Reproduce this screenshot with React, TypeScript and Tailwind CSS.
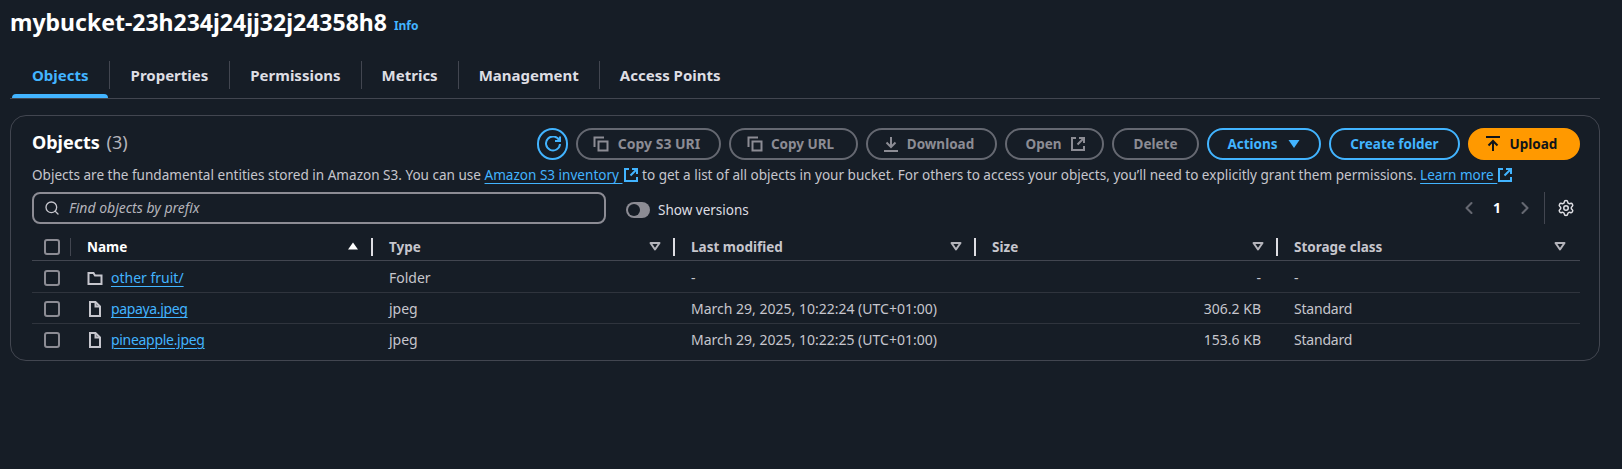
import React from "react";
import { Settings, ChevronLeft, ChevronRight, Search } from "lucide-react";

const S = { fill: "none", stroke: "currentColor", strokeWidth: 2 } as const;

const Ic = ({ children, cls = "w-4 h-4" }: { children: React.ReactNode; cls?: string }) => (
  <svg viewBox="0 0 16 16" className={`${cls} shrink-0`} {...S}>
    {children}
  </svg>
);
const CopyI = () => (
  <Ic>
    <path d="M1.5 11V1.5H11" />
    <path d="M5.5 5.5h9v9h-9z" />
  </Ic>
);
const DownloadI = () => (
  <Ic>
    <path d="M8 1v10M3.5 6.5 8 11l4.5-4.5M1 15h14" />
  </Ic>
);
const UploadI = () => (
  <Ic>
    <path d="M1 1h14M8 15V5M3.5 9.5 8 5l4.5 4.5" />
  </Ic>
);
const ExtI = ({ cls = "w-4 h-4" }: { cls?: string }) => (
  <Ic cls={cls}>
    <path d="M6 2H2v12h12v-4" />
    <path d="M9 2h5v5M14 2 7.5 8.5" />
  </Ic>
);
const RefreshI = () => (
  <Ic>
    <path d="M10 5h5V.5" />
    <path d="M14.4 4.6A7 7 0 1 0 15 8" />
  </Ic>
);
const FolderI = () => (
  <Ic>
    <path d="M1.5 3h5l1.5 2.5h6.5V14h-13z" />
  </Ic>
);
const FileI = () => (
  <Ic>
    <path d="M3 1h5.5L13 5.5V15H3z" />
    <path d="M8.5 1v4.5H13" />
  </Ic>
);
const Caret = () => (
  <svg viewBox="0 0 16 16" className="w-4 h-4 shrink-0 text-[#b4b4bb] mt-[-2px]" fill="none" stroke="currentColor" strokeWidth="2">
    <path d="M3.5 5h9L8 11.5z" strokeLinejoin="round" />
  </svg>
);
const SortUp = () => (
  <svg viewBox="0 0 16 16" className="w-4 h-4 shrink-0 text-white" fill="currentColor">
    <path d="M8 3.5 13 10.5H3z" />
  </svg>
);

const Btn = ({ children, kind = "off", cls = "" }: { children: React.ReactNode; kind?: "off" | "blue" | "main"; cls?: string }) => {
  const k =
    kind === "off"
      ? "border-[#656871] text-[#8c8c94]"
      : kind === "blue"
        ? "border-[#42b4ff] text-[#42b4ff]"
        : "border-[#ff9900] bg-[#ff9900] text-[#0f141a]";
  return (
    <div className={`h-8 rounded-full border-2 flex items-center justify-center gap-2 text-[13.5px] font-bold ${k} ${cls}`}>
      {children}
    </div>
  );
};

const tabs = ["Objects", "Properties", "Permissions", "Metrics", "Management", "Access Points"];
const cols = "grid grid-cols-[39px_302px_302px_301px_302px_302px]";

const HeadCell = ({ label, active, last }: { label: string; active?: boolean; last?: boolean }) => (
  <div className="relative flex items-center justify-between pl-4 pr-3 h-full">
    <span className={`text-[13.5px] font-bold ${active ? "text-white" : "text-[#c6c6cd]"}`}>{label}</span>
    {active ? <SortUp /> : <Caret />}
    {!last && <span className="absolute right-0 top-0 h-[18px] w-[2px] bg-[#dedee3]" />}
  </div>
);

const Check = () => <span className="block w-4 h-4 rounded-[3px] border-2 border-[#8c8c94]" />;

const Row = ({
  icon,
  name,
  type,
  date,
  size,
  cls,
  nameCls = "",
  border,
}: {
  icon: React.ReactNode;
  name: string;
  type: string;
  date: string;
  size: string;
  cls: string;
  nameCls?: string;
  border?: boolean;
}) => (
  <div className={`${cols} items-center text-sm text-[#c6c6cd] ${cls} ${border ? "border-b border-[#2f343d]" : ""}`}>
    <div className="pl-3">
      <Check />
    </div>
    <div className="pl-4 flex items-center gap-2 text-[#c6c6cd]">
      {icon}
      <span className={`text-[#42b4ff] underline underline-offset-[3px] decoration-1 ${nameCls}`}>{name}</span>
    </div>
    <div className="pl-4">{type}</div>
    <div className="pl-4">{date}</div>
    <div className="text-right pr-[17px]">{size}</div>
    <div className="pl-4 tracking-[-0.2px]">{size === "-" ? "-" : "Standard"}</div>
  </div>
);

const Ext = () => (
  <span className="inline-block align-[-3px] text-[#42b4ff]">
    <ExtI />
  </span>
);

export default function App() {
  return (
    <div className="w-[1622px] h-[469px] overflow-hidden bg-[#161d26] text-[#c6c6cd] font-['Noto_Sans',sans-serif] px-[10px]">
      <div className="h-[44px] flex items-center gap-[7px]">
        <h1 className="text-[23px] font-bold text-white leading-none">mybucket-23h234j24jj32j24358h8</h1>
        <span className="text-xs font-bold text-[#42b4ff] mt-[7px]">Info</span>
      </div>

      <div className="w-[1590px] h-[55px] border-b border-[#424650] flex items-end pb-[9px] pl-[2px] relative">
        {tabs.map((t, i) => (
          <div
            key={t}
            className={`h-7 flex items-center text-[15px] font-bold ${i === 1 ? "pl-[21px] pr-[21px]" : "px-5"} ${i < tabs.length - 1 ? "border-r border-[#424650]" : ""} ${i === 0 ? "text-[#42b4ff]" : "text-[#dedee3]"}`}
          >
            {t}
          </div>
        ))}
        <span className="absolute left-[2px] bottom-0 w-[96px] h-1 rounded-t-sm bg-[#42b4ff]" />
      </div>

      <section className="mt-4 w-[1590px] h-[246px] border border-[#424650] rounded-2xl">
        <div className="h-[44px] pt-3 pl-[21px] pr-[19px] flex items-start justify-between">
          <div className="text-lg leading-8 font-bold text-white mt-[-2px]">
            Objects <span className="ml-[2px] font-normal text-[#b4b4bb]">(3)</span>
          </div>
          <div className="flex items-center gap-2">
            <div className="w-[31px] h-8 rounded-full border-2 border-[#42b4ff] text-[#42b4ff] flex items-center justify-center">
              <RefreshI />
            </div>
            <Btn cls="w-[145px] pr-[4px] !gap-[9px]">
              <CopyI />
              <span className="text-sm">Copy S3 URI</span>
            </Btn>
            <Btn cls="w-[129px] pr-[6px]">
              <CopyI />
              Copy URL
            </Btn>
            <Btn cls="w-[131px] pr-[6px]">
              <DownloadI />
              Download
            </Btn>
            <Btn cls="w-[99px] pl-[2px]">
              Open
              <ExtI />
            </Btn>
            <Btn cls="w-[87px]">Delete</Btn>
            <Btn kind="blue" cls="w-[114px] !gap-[8px] pl-[1px]">
              Actions
              <svg viewBox="0 0 16 16" className="w-4 h-4" fill="currentColor">
                <path d="M2.5 4h11L8 12z" />
              </svg>
            </Btn>
            <Btn kind="blue" cls="w-[131px]">Create folder</Btn>
            <Btn kind="main" cls="w-[112px] !gap-[9px] pr-[6px]">
              <UploadI />
              Upload
            </Btn>
          </div>
        </div>

        <div className="h-5 mt-[5px] pl-[21px] text-[13.55px] leading-5 whitespace-pre">
          Objects are the fundamental entities stored in Amazon S3. You can use{" "}
          <span className="text-[#42b4ff] underline underline-offset-[3px] decoration-1">Amazon S3 inventory </span>
          <Ext /> to get a list of all objects in your bucket. For others to access your objects, you’ll need to explicitly grant them permissions.{" "}
          <span className="text-[#42b4ff] underline underline-offset-[3px] decoration-1">Learn more </span>
          <Ext />
        </div>

        <div className="h-8 mt-[7px] pl-[21px] flex items-center">
          <div className="w-[574px] h-8 rounded-lg border-2 border-[#8c8c94] flex items-center pl-[10px] gap-[9px]">
            <Search className="w-4 h-4 text-[#c6c6cd]" strokeWidth={2} />
            <span className="text-sm italic text-[#b4b4bb]">Find objects by prefix</span>
          </div>
          <div className="ml-[20px] mt-[4px] flex items-center gap-2">
            <span className="w-6 h-4 rounded-full bg-[#8c8c94] relative">
              <span className="absolute left-[2px] top-[2px] w-3 h-3 rounded-full bg-[#161d26]" />
            </span>
            <span className="text-[13.5px] text-[#dedee3]">Show versions</span>
          </div>
          <div className="ml-auto pr-[24px] flex items-center h-8">
            <ChevronLeft className="w-5 h-5 text-[#656871]" strokeWidth={2.5} />
            <span className="w-[36px] text-center text-sm font-bold text-white">1</span>
            <ChevronRight className="w-5 h-5 text-[#656871]" strokeWidth={2.5} />
            <span className="ml-[9px] h-8 w-px bg-[#424650]" />
            <Settings className="ml-[12px] w-[18px] h-[18px] text-[#dedee3]" strokeWidth={2} />
          </div>
        </div>

        <div className="ml-[21px] w-[1548px] mt-[12px]">
          <div className={`${cols} h-[25px] pt-[2px] border-b border-[#424650] items-start`}>
            <div className="pl-3 relative h-[18px] flex items-center">
              <Check />
              <span className="absolute left-[38px] top-0 h-[18px] w-px bg-[#424650]" />
            </div>
            <div className="h-[18px]"><HeadCell label="Name" active /></div>
            <div className="h-[18px]"><HeadCell label="Type" /></div>
            <div className="h-[18px]"><HeadCell label="Last modified" /></div>
            <div className="h-[18px]"><HeadCell label="Size" /></div>
            <div className="h-[18px]"><HeadCell label="Storage class" last /></div>
          </div>
          <Row icon={<FolderI />} name="other fruit/" type="Folder" date="-" size="-" cls="h-[32px] pt-[2px]" border />
          <Row icon={<FileI />} name="papaya.jpeg" nameCls="tracking-[-0.35px]" type="jpeg" date="March 29, 2025, 10:22:24 (UTC+01:00)" size="306.2 KB" cls="h-[31px] pt-[2px]" border />
          <Row icon={<FileI />} name="pineapple.jpeg" nameCls="tracking-[-0.3px]" type="jpeg" date="March 29, 2025, 10:22:25 (UTC+01:00)" size="153.6 KB" cls="h-[31px]" />
        </div>
      </section>
    </div>
  );
}
